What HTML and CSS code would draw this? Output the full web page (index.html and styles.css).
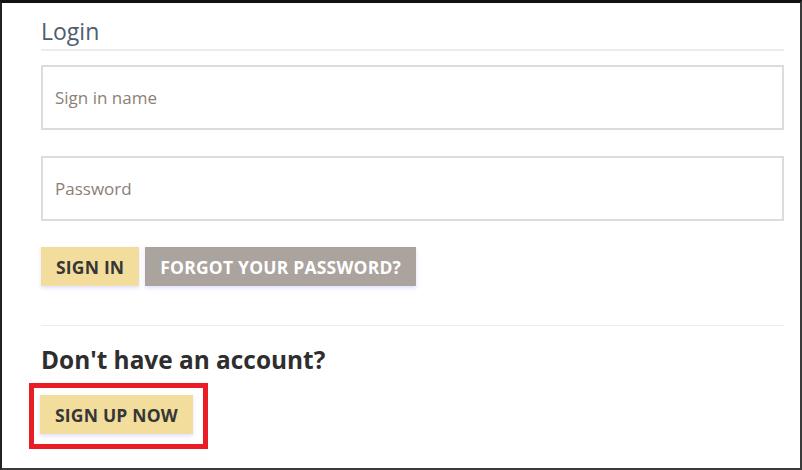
FILE: index.html
```html
<!DOCTYPE html>
<html>
<head>
<meta charset="utf-8">
<link rel="stylesheet" href="styles.css">
</head>
<body>
<div class="frame">
  <div class="panel">
    <h2 class="title">Login</h2>
    <div class="field"><input class="input" type="text" placeholder="Sign in name"></div>
    <div class="field"><input class="input" type="password" placeholder="Password"></div>
    <div class="actions">
      <button class="btn btn-primary">SIGN IN</button>
      <button class="btn btn-secondary">FORGOT YOUR PASSWORD?</button>
    </div>
    <div class="divider"></div>
    <h3 class="subtitle">Don't have an account?</h3>
    <div class="highlight">
      <button class="btn btn-primary">SIGN UP NOW</button>
    </div>
  </div>
</div>
</body>
</html>
```
FILE: styles.css
```css
html, body {
  margin: 0;
  padding: 0;
  background: #ffffff;
}
body {
  width: 802px;
  height: 470px;
  overflow: hidden;
  font-family: "Open Sans", "Noto Sans", sans-serif;
}
.frame {
  box-sizing: border-box;
  width: 802px;
  height: 470px;
  border-top: 3px solid #111;
  border-left: 2px solid #222;
  border-right: 2px solid #3a3a3a;
  border-bottom: 2px solid #3a3a3a;
  background: #fff;
}
.panel {
  display: flex;
  flex-direction: column;
  align-items: flex-start;
  padding: 0 16px 0 39px;
}
.title {
  align-self: stretch;
  margin: 0;
  padding: 15px 0 5px;
  font-size: 23px;
  font-weight: 400;
  line-height: 26px;
  color: #4e5d6e;
  border-bottom: 2px solid #ececec;
}
.field {
  align-self: stretch;
  margin-top: 0;
  margin-bottom: 26px;
}
.field:first-of-type {
  margin-top: 14px;
}
.input {
  box-sizing: border-box;
  display: block;
  width: 100%;
  height: 65px;
  margin: 0;
  padding: 0 12px;
  border: 2px solid #dcdcdc;
  border-radius: 0;
  outline: none;
  font-family: inherit;
  font-size: 17px;
  color: #333;
  background: #fff;
}
.input::placeholder {
  color: #8d7e76;
}
.actions {
  display: flex;
  gap: 6px;
  margin-top: 0;
}
.btn {
  box-sizing: border-box;
  height: 39px;
  margin: 0;
  padding: 0 15px;
  border: none;
  border-radius: 0;
  font-family: inherit;
  font-size: 17.5px;
  font-weight: 700;
  letter-spacing: 0.2px;
  cursor: pointer;
  box-shadow: 0 2px 4px rgba(120, 110, 240, 0.22);
}
.btn-primary {
  background: #f2dd9c;
  color: #363636;
}
.btn-secondary {
  background: #aba39e;
  color: #ffffff;
}
.divider {
  align-self: stretch;
  height: 1px;
  margin-top: 39px;
  background: #ececec;
}
.subtitle {
  margin: 19px 0 0;
  font-size: 24.4px;
  font-weight: 700;
  line-height: 30px;
  color: #2e2e2e;
}
.highlight {
  margin: 8px 0 0 -12px;
  padding: 7px 10px 10px 6px;
  border: 5px solid #ea1d26;
}
.highlight .btn {
  display: block;
}
```
